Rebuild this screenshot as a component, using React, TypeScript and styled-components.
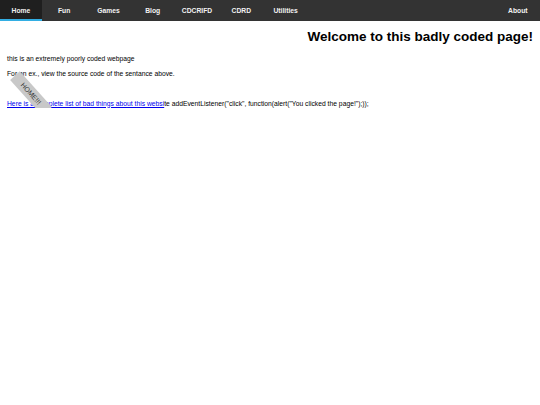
import * as React from 'react';
import styled, { createGlobalStyle } from 'styled-components';

const GlobalStyle = createGlobalStyle`
  html, body {
    margin: 0;
    padding: 0;
    background: #fff;
  }
  body {
    font-family: "Liberation Sans", Arial, sans-serif;
    color: #000;
  }
`;

const NavBar = styled.ul`
  display: flex;
  margin: 0;
  padding: 0;
  list-style: none;
  height: 21px;
  background: #333;
`;

const NavItem = styled.li<{ active?: boolean; right?: boolean }>`
  box-sizing: border-box;
  display: flex;
  align-items: center;
  justify-content: center;
  width: ${(props) => (props.active ? '42px' : '44.3px')};
  height: 21px;
  margin-left: ${(props) => (props.right ? 'auto' : '0')};
  padding-top: ${(props) => (props.active ? '2px' : '0')};
  background: ${(props) => (props.active ? '#1f1f1f' : 'transparent')};
  border-bottom: ${(props) => (props.active ? '2px solid #33aee3' : 'none')};
  color: #f2f2f2;
  font-size: 6.75px;
  font-weight: bold;
`;

const Content = styled.main`
  position: relative;
  padding: 0 7px;
`;

const Title = styled.h1`
  margin: 7.5px 0 0;
  text-align: right;
  font-size: 13.5px;
  font-weight: bold;
  line-height: 15.5px;
`;

const Para = styled.p<{ gap: number }>`
  margin: ${(props) => props.gap}px 0 0;
  font-size: 6.75px;
  line-height: 8px;
`;

const Link = styled.a`
  color: #0000ee;
  text-decoration: underline;
`;

const Ribbon = styled.div`
  position: absolute;
  left: 7px;
  top: 58px;
  width: 48px;
  height: 13px;
  display: flex;
  align-items: center;
  justify-content: center;
  background: #c8c8c8;
  color: #333;
  font-size: 7px;
  transform: rotate(48deg);
`;

const pages = ['Home', 'Fun', 'Games', 'Blog', 'CDCRIFD', 'CDRD', 'Utilities'];

export default function App() {
  return (
    <>
      <GlobalStyle />
      <NavBar>
        {pages.map((p, i) => (
          <NavItem key={p} active={i === 0}>{p}</NavItem>
        ))}
        <NavItem right>About</NavItem>
      </NavBar>
      <Content>
        <Title>Welcome to this badly coded page!</Title>
        <Para gap={10.5}>this is an extremely poorly coded webpage</Para>
        <Para gap={7}>For an ex., view the source code of the sentance above.</Para>
        <Para gap={22}>
          <Link href="#">Here is a complete list of bad things about this websi</Link>
          te addEventListener("click", function(alert("You clicked the page!");));</Para>
        <Ribbon>HOME!!!</Ribbon>
      </Content>
    </>
  );
}
